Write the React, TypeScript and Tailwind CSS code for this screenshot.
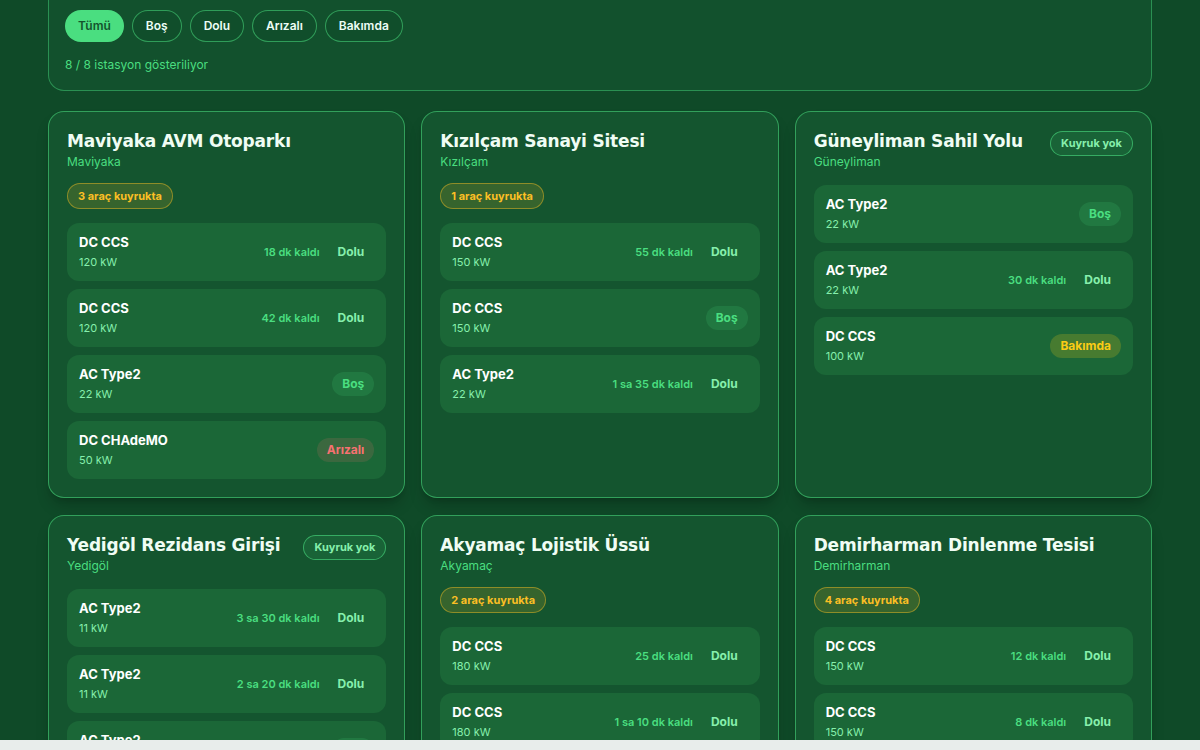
import React from "react";

type Status = "Dolu" | "Boş" | "Arızalı" | "Bakımda";
type Charger = { name: string; kw: string; left?: string; status: Status };
type Station = { title: string; city: string; queue: number; chargers: Charger[] };

const stations: Station[] = [
  {
    title: "Maviyaka AVM Otoparkı",
    city: "Maviyaka",
    queue: 3,
    chargers: [
      { name: "DC CCS", kw: "120 kW", left: "18 dk kaldı", status: "Dolu" },
      { name: "DC CCS", kw: "120 kW", left: "42 dk kaldı", status: "Dolu" },
      { name: "AC Type2", kw: "22 kW", status: "Boş" },
      { name: "DC CHAdeMO", kw: "50 kW", status: "Arızalı" },
    ],
  },
  {
    title: "Kızılçam Sanayi Sitesi",
    city: "Kızılçam",
    queue: 1,
    chargers: [
      { name: "DC CCS", kw: "150 kW", left: "55 dk kaldı", status: "Dolu" },
      { name: "DC CCS", kw: "150 kW", status: "Boş" },
      { name: "AC Type2", kw: "22 kW", left: "1 sa 35 dk kaldı", status: "Dolu" },
    ],
  },
  {
    title: "Güneyliman Sahil Yolu",
    city: "Güneyliman",
    queue: 0,
    chargers: [
      { name: "AC Type2", kw: "22 kW", status: "Boş" },
      { name: "AC Type2", kw: "22 kW", left: "30 dk kaldı", status: "Dolu" },
      { name: "DC CCS", kw: "100 kW", status: "Bakımda" },
    ],
  },
  {
    title: "Yedigöl Rezidans Girişi",
    city: "Yedigöl",
    queue: 0,
    chargers: [
      { name: "AC Type2", kw: "11 kW", left: "3 sa 30 dk kaldı", status: "Dolu" },
      { name: "AC Type2", kw: "11 kW", left: "2 sa 20 dk kaldı", status: "Dolu" },
      { name: "AC Type2", kw: "11 kW", status: "Boş" },
    ],
  },
  {
    title: "Akyamaç Lojistik Üssü",
    city: "Akyamaç",
    queue: 2,
    chargers: [
      { name: "DC CCS", kw: "180 kW", left: "25 dk kaldı", status: "Dolu" },
      { name: "DC CCS", kw: "180 kW", left: "1 sa 10 dk kaldı", status: "Dolu" },
      { name: "AC Type2", kw: "22 kW", status: "Boş" },
    ],
  },
  {
    title: "Demirharman Dinlenme Tesisi",
    city: "Demirharman",
    queue: 4,
    chargers: [
      { name: "DC CCS", kw: "150 kW", left: "12 dk kaldı", status: "Dolu" },
      { name: "DC CCS", kw: "150 kW", left: "8 dk kaldı", status: "Dolu" },
      { name: "AC Type2", kw: "22 kW", status: "Boş" },
    ],
  },
];

function StatusBadge({ status }: { status: Status }) {
  if (status === "Dolu")
    return <span className="px-[10px] py-[3px] rounded-full text-[12px] font-bold text-[#86efac]">Dolu</span>;
  if (status === "Boş")
    return <span className="px-[10px] py-[3px] rounded-full text-[12px] font-bold text-[#4ade80] bg-[#4ade80]/15">Boş</span>;
  if (status === "Arızalı")
    return <span className="px-[10px] py-[3px] rounded-full text-[12px] font-bold text-[#f87171] bg-[#f87171]/15">Arızalı</span>;
  return <span className="px-[10px] py-[3px] rounded-full text-[12px] font-bold text-[#facc15] bg-[#facc15]/20">Bakımda</span>;
}

function StationCard({ s }: { s: Station }) {
  return (
    <div className="rounded-2xl border border-[#4ade80]/55 bg-[#14552f] px-[18px] pt-[18px] pb-[18px] shadow-lg shadow-black/20">
      <div className="flex items-start justify-between gap-3">
        <div>
          <div className="text-[17px] leading-[22px] font-semibold text-[#f0fdf4]" style={{ fontFamily: '"DejaVu Sans", sans-serif', letterSpacing: "-0.2px" }}>
            {s.title}
          </div>
          <div className="text-[12px] leading-[16px] mt-[2px] text-[#4ade80]">{s.city}</div>
        </div>
        {s.queue === 0 && (
          <span className="mt-[1px] h-[25px] px-[10px] flex items-center rounded-full border border-[#4ade80]/60 bg-[#4ade80]/10 text-[11px] font-bold text-[#86efac] whitespace-nowrap">
            Kuyruk yok
          </span>
        )}
      </div>
      {s.queue > 0 && (
        <div className="mt-[13px] flex">
          <span className="flex h-[26px] items-center px-[10px] rounded-full border border-[#fbbf24]/45 bg-[#fbbf24]/15 text-[11px] font-bold text-[#fbbf24]">
            {s.queue} araç kuyrukta
          </span>
        </div>
      )}
      <div className={`flex flex-col gap-2 ${s.queue > 0 ? "mt-[14px]" : "mt-[15px]"}`}>
        {s.chargers.map((c, i) => (
          <div key={i} className="h-[58px] rounded-xl bg-[#1b6737] px-3 flex items-center justify-between">
            <div className="flex flex-col -mt-[1px]">
              <span className="text-[13px] leading-[18px] font-bold text-white">{c.name}</span>
              <span className="text-[11px] leading-[16px] mt-[3px] text-[#86efac]">{c.kw}</span>
            </div>
            <div className="flex items-center gap-[8px]">
              {c.left && <span className="text-[11px] font-semibold text-[#4ade80]">{c.left}</span>}
              <StatusBadge status={c.status} />
            </div>
          </div>
        ))}
      </div>
    </div>
  );
}

export default function App() {
  const filters = ["Tümü", "Boş", "Dolu", "Arızalı", "Bakımda"];
  return (
    <div className="h-[750px] overflow-hidden bg-[#0f4a28] text-white" style={{ fontFamily: "Inter, 'Noto Sans', sans-serif" }}>
      <div className="px-12">
        <div className="-mt-[20px] rounded-2xl border border-[#4ade80]/45 bg-[#12512d] px-4 pt-[29px] pb-[16px]">
          <div className="flex gap-2">
            {filters.map((f, i) => (
              <button
                key={f}
                className={
                  i === 0
                    ? "h-[32px] px-[13px] rounded-full bg-[#4ade80] text-[#14532d] text-[12px] font-semibold"
                    : "h-[32px] px-[13px] rounded-full border border-[#4ade80]/55 bg-[#0f4a28]/40 text-[#ecfdf5] text-[12px] font-semibold"
                }
              >
                {f}
              </button>
            ))}
          </div>
          <div className="mt-[14px] text-[12px] text-[#4ade80]">8 / 8 istasyon gösteriliyor</div>
        </div>
        <div className="mt-[20px] grid grid-cols-3 gap-x-4 gap-y-[17px]">
          {stations.map((s) => (
            <StationCard key={s.title} s={s} />
          ))}
        </div>
      </div>
      <div className="fixed bottom-0 left-0 right-0 h-[10px] bg-[#e8edeb]" />
    </div>
  );
}
